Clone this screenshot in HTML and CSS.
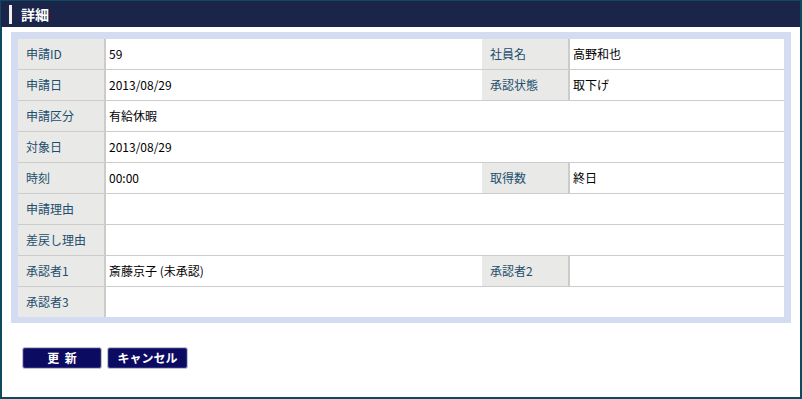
FILE: index.html
```html
<!DOCTYPE html>
<html lang="ja">
<head>
  <meta charset="UTF-8" />
  <title>詳細</title>
  <link rel="stylesheet" href="styles.css">
</head>
<body>
  <div class="frame">
    <div class="title-bar"><span class="mark"></span>詳細</div>

    <div class="panel">
      <table class="detail">
        <colgroup>
          <col class="c-label"><col class="c-value"><col class="c-label"><col>
        </colgroup>
        <tr>
          <th>申請ID</th><td>59</td>
          <th>社員名</th><td>高野和也</td>
        </tr>
        <tr>
          <th>申請日</th><td>2013/08/29</td>
          <th>承認状態</th><td>取下げ</td>
        </tr>
        <tr>
          <th>申請区分</th><td colspan="3">有給休暇</td>
        </tr>
        <tr>
          <th>対象日</th><td colspan="3">2013/08/29</td>
        </tr>
        <tr>
          <th>時刻</th><td>00:00</td>
          <th>取得数</th><td>終日</td>
        </tr>
        <tr>
          <th>申請理由</th><td colspan="3"></td>
        </tr>
        <tr>
          <th>差戻し理由</th><td colspan="3"></td>
        </tr>
        <tr>
          <th>承認者1</th><td>斎藤京子 (未承認)</td>
          <th>承認者2</th><td></td>
        </tr>
        <tr>
          <th>承認者3</th><td colspan="3"></td>
        </tr>
      </table>
    </div>

    <div class="actions">
      <button class="btn">更&nbsp;&nbsp;新</button>
      <button class="btn">キャンセル</button>
    </div>
  </div>
</body>
</html>
```

FILE: styles.css
```css
* { box-sizing: border-box; }

body {
  margin: 0;
  font-family: "Noto Sans CJK JP", "Liberation Sans", sans-serif;
  background: #ffffff;
}

.frame {
  width: 802px;
  height: 399px;
  border: 2px solid #0d4a5f;
  border-top-width: 1px;
}

.title-bar {
  display: flex;
  align-items: center;
  height: 26px;
  margin-left: -1px;
  background: #1b2449;
  color: #ffffff;
  font-size: 14px;
  font-weight: bold;
}

.title-bar .mark {
  width: 3px;
  height: 19px;
  margin: 0 9px 0 8px;
  background: #f0f0f0;
}

.panel {
  margin: 5px 9px 0 9px;
  padding: 7px 7px 6px 7px;
  background: #d3dcf0;
}

.detail {
  width: 100%;
  border-collapse: collapse;
  background: #ffffff;
  font-size: 12px;
}

.c-label { width: 87px; }
.c-value { width: 377px; }

.detail th,
.detail td {
  height: 31px;
  padding: 0 4px 0 3px;
  border-top: 1px solid #cccccc;
  text-align: left;
  font-weight: normal;
}

.detail tr:first-child th,
.detail tr:first-child td {
  border-top: none;
  height: 30px;
}

.detail th {
  padding-left: 8px;
  background: #e9e9e7;
  color: #1d4e6e;
  border-right: 2px solid #cccccc;
}

.detail td {
  color: #000000;
}

.actions {
  display: flex;
  gap: 5px;
  margin: 24px 0 0 20px;
}

.btn {
  width: 80px;
  height: 22px;
  padding: 0;
  border: 1px solid #c4c4c4;
  border-radius: 3px;
  background: #0b0b62;
  box-shadow: inset 0 0 0 1px #2a2a80;
  color: #ffffff;
  font-family: "Noto Sans CJK JP", sans-serif;
  font-size: 12px;
  font-weight: bold;
  line-height: 18px;
}

.btn + .btn { width: 81px; }
```
